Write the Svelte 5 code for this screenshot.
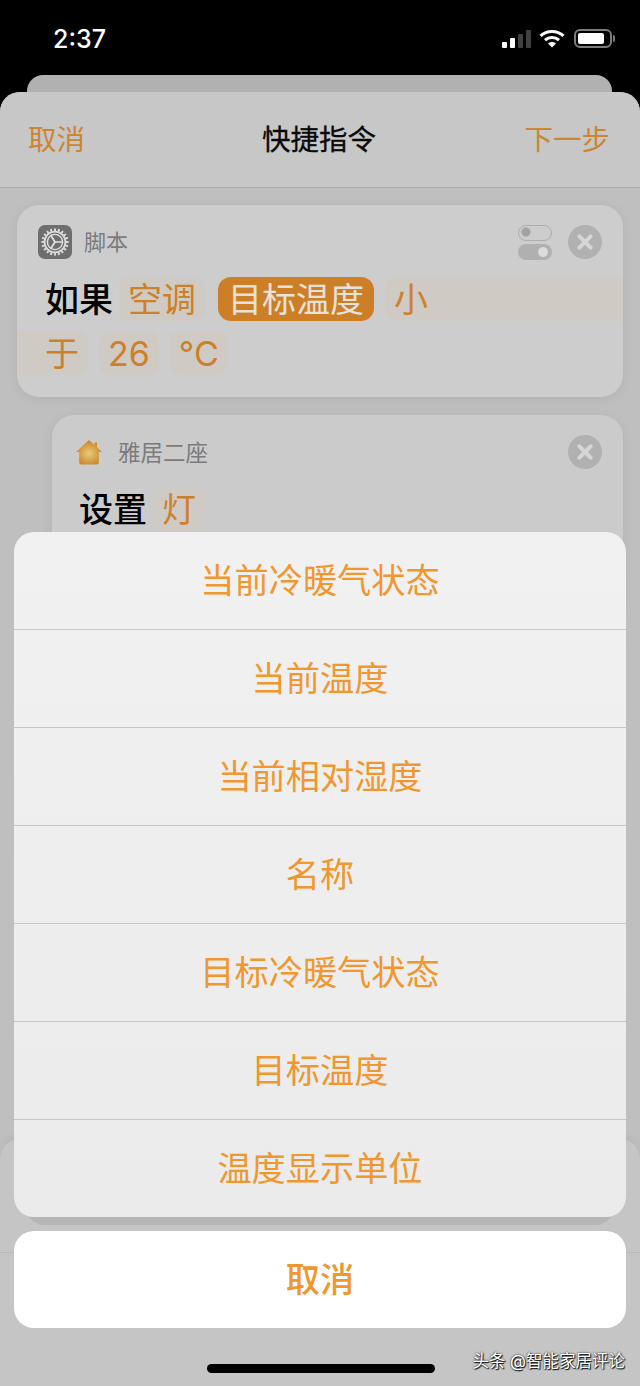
<script>
	const options = ['当前冷暖气状态', '当前温度', '当前相对湿度', '名称', '目标冷暖气状态', '目标温度', '温度显示单位']
	const teeth = Array.from({ length: 20 }, (_, i) => i * 18)
</script>

<div class="page">
	<div class="status">
		<span class="time">2:37</span>
		<div class="status-icons">
			<div class="signal">
				<i class="bar b1"></i>
				<i class="bar b2"></i>
				<i class="bar b3 off"></i>
				<i class="bar b4 off"></i>
			</div>
			<svg class="wifi" width="26" height="19" viewBox="0 0 26 19">
				<path d="M1.5 6.8C7.8 .9 18.2 .9 24.5 6.8" fill="none" stroke="#fff" stroke-width="3" />
				<path d="M6 11.2c3.9-3.5 10.1-3.5 14 0" fill="none" stroke="#fff" stroke-width="3" />
				<path d="M9 14.4c2.3-2 5.7-2 8 0L13 18.6z" fill="#fff" />
			</svg>
			<div class="battery"><i></i></div>
			<i class="battery-tip"></i>
		</div>
	</div>

	<div class="back-card"></div>

	<div class="sheet">
		<header class="nav">
			<span class="nav-side">取消</span>
			<span class="nav-title">快捷指令</span>
			<span class="nav-side right">下一步</span>
		</header>

		<div class="content">
			<section class="card first">
				<div class="card-head">
					<div class="app-icon">
						<svg width="32" height="32" viewBox="0 0 32 32">
							{#each teeth as a}
								<rect x="15" y="2.4" width="2" height="3.6" fill="#d8d8d8" transform="rotate({a} 16 16)" />
							{/each}
							<circle cx="16" cy="16" r="10.4" fill="none" stroke="#d8d8d8" stroke-width="1.8" />
							<circle cx="16" cy="16" r="7.6" fill="none" stroke="#e4e4e4" stroke-width="1.4" />
							<path d="M16 16L24 16M16 16L11.6 9M16 16L11.6 23" stroke="#e4e4e4" stroke-width="1.7" />
						</svg>
					</div>
					<span class="app-name">脚本</span>
					<div class="toggles">
						<div class="toggle on"><i></i></div>
						<div class="toggle off"><i></i></div>
					</div>
					<div class="close"></div>
				</div>
				<div class="line">
					<span class="word">如果</span>
					<span class="token">空调</span>
					<span class="token active">目标温度</span>
					<span class="token open-right">小</span>
				</div>
				<div class="line second">
					<span class="token open-left">于</span>
					<span class="token">26</span>
					<span class="token">°C</span>
				</div>
			</section>

			<section class="card nested">
				<div class="card-head">
					<svg class="house" width="26" height="25" viewBox="0 0 26 25">
						<defs>
							<radialGradient id="glow" cx="50%" cy="55%" r="50%">
								<stop offset="0" stop-color="#e3cd84" />
								<stop offset="0.45" stop-color="#dcae55" />
								<stop offset="1" stop-color="#cd882c" />
							</radialGradient>
						</defs>
						<path d="M13 0L18.5 5V2.5H21V7.3L26 12H22.8V22.5Q22.8 24.5 20.8 24.5H5.2Q3.2 24.5 3.2 22.5V12H0Z" fill="url(#glow)" />
					</svg>
					<span class="app-name">雅居二座</span>
					<div class="close push"></div>
				</div>
				<div class="line">
					<span class="word">设置</span>
					<span class="token">灯</span>
				</div>
			</section>
		</div>

		<div class="dock">
			<div class="dock-peek"></div>
			<div class="dock-line"></div>
		</div>
	</div>

	<div class="actions">
		<div class="action-list">
			{#each options as option}
				<div class="action">{option}</div>
			{/each}
		</div>
		<div class="action-cancel">取消</div>
	</div>

	<div class="home-bar"></div>
	<div class="watermark">头条 @智能家居评论</div>
</div>

<style>
	:global(body) {
		margin: 0;
		background: #000;
	}

	.page {
		position: relative;
		width: 640px;
		height: 1386px;
		overflow: hidden;
		background: #000;
		display: flex;
		flex-direction: column;
		font-family: Inter, 'Noto Sans CJK SC', sans-serif;
	}

	.status {
		height: 75px;
		flex: none;
		box-sizing: border-box;
		display: flex;
		justify-content: space-between;
		padding: 26px 25px 0 53px;
		color: #fff;
	}

	.time {
		font-size: 25px;
		font-weight: 500;
		line-height: 26px;
	}

	.status-icons {
		display: flex;
		align-items: flex-start;
		padding-top: 3px;
	}

	.signal {
		display: flex;
		align-items: flex-end;
		gap: 3px;
		height: 19px;
		margin-right: 8px;
	}

	.bar {
		width: 5px;
		border-radius: 1px;
		background: #fff;
	}

	.bar.off {
		background: #414141;
	}

	.b1 {
		height: 6px;
	}
	.b2 {
		height: 10px;
	}
	.b3 {
		height: 14px;
	}
	.b4 {
		height: 18px;
	}

	.wifi {
		margin-right: 9px;
	}

	.battery {
		width: 38px;
		height: 19px;
		box-sizing: border-box;
		border: 2px solid #7c7c7c;
		border-radius: 6px;
		padding: 2px;
	}

	.battery i {
		display: block;
		width: 26px;
		height: 100%;
		background: #fff;
		border-radius: 2px;
	}

	.battery-tip {
		width: 2px;
		height: 7px;
		margin: 6px 0 0 1px;
		background: #7c7c7c;
		border-radius: 0 2px 2px 0;
	}

	.back-card {
		height: 30px;
		margin: 0 28px -13px 27px;
		flex: none;
		background: #b1b1b1;
		border-radius: 16px 16px 0 0;
	}

	.sheet {
		flex: 1;
		display: flex;
		flex-direction: column;
		position: relative;
		background: #bfbfbf;
		border-radius: 20px 20px 0 0;
		overflow: hidden;
	}

	.nav {
		height: 96px;
		flex: none;
		box-sizing: border-box;
		display: grid;
		grid-template-columns: 1fr auto 1fr;
		align-items: center;
		padding: 0 30px 0 28px;
		background: #c7c7c7;
		border-bottom: 1px solid #acacac;
	}

	.nav-side {
		font-size: 28.5px;
		line-height: 42px;
		color: #cc8530;
	}

	.nav-side.right {
		text-align: right;
	}

	.nav-title {
		font-size: 28.5px;
		line-height: 42px;
		color: #0a0a0a;
		-webkit-text-stroke: 0.3px #0a0a0a;
	}

	.content {
		flex: 1;
		min-height: 0;
		box-sizing: border-box;
		padding: 17px 17px 0;
		display: flex;
		flex-direction: column;
		gap: 18px;
		overflow: hidden;
	}

	.card {
		flex: none;
		box-sizing: border-box;
		background: #cdcdcd;
		border-radius: 22px;
		box-shadow: 0 2px 12px rgba(0, 0, 0, 0.07);
	}

	.first {
		height: 192px;
		padding: 20px 21px 0 21px;
		overflow: hidden;
	}

	.nested {
		height: 200px;
		margin-left: 35px;
		padding: 20px 21px 0 24px;
		background: #cbcbcb;
		overflow: hidden;
	}

	.card-head {
		display: flex;
		align-items: center;
		height: 34px;
	}

	.app-icon {
		width: 34px;
		height: 34px;
		border-radius: 7px;
		background: #6e6e6e;
		display: flex;
		align-items: center;
		justify-content: center;
	}

	.app-name {
		font-size: 22px;
		line-height: 35px;
		height: 34px;
		color: #7b7b7b;
		margin-left: 12px;
	}

	.nested .app-name {
		font-size: 22.5px;
		margin-left: 11px;
	}

	.house {
		margin-right: 5px;
	}

	.toggles {
		margin-left: auto;
		display: flex;
		flex-direction: column;
		gap: 3px;
		margin-right: 16px;
	}

	.toggle {
		width: 34px;
		height: 16px;
		box-sizing: border-box;
		border-radius: 8px;
		position: relative;
	}

	.toggle i {
		position: absolute;
		width: 10px;
		height: 10px;
		top: 3px;
		border-radius: 50%;
	}

	.toggle.on {
		border: 1.5px solid #aeaeae;
	}

	.toggle.on i {
		left: 2px;
		top: 1.5px;
		box-sizing: border-box;
		background: #a2a2a2;
		border: 1.5px solid #b8b8b8;
	}

	.toggle.off {
		background: #b0b0b0;
	}

	.toggle.off i {
		right: 4px;
		background: #dcdcdc;
	}

	.close {
		width: 34px;
		height: 34px;
		flex: none;
		border-radius: 50%;
		background: #b1b1b1;
		position: relative;
	}

	.close.push {
		margin-left: auto;
	}

	.close::before,
	.close::after {
		content: '';
		position: absolute;
		left: 7px;
		top: 15px;
		width: 20px;
		height: 4px;
		border-radius: 2px;
		background: #d6d6d6;
		transform: rotate(45deg);
	}

	.close::after {
		transform: rotate(-45deg);
	}

	.line {
		display: flex;
		align-items: center;
		gap: 11px;
		height: 44px;
		margin-top: 18px;
		margin-left: 7px;
		font-size: 34px;
	}

	.first .line {
		margin-right: -21px;
	}

	.nested .line {
		margin-left: 3px;
		margin-top: 18px;
		gap: 11px;
	}

	.line.second {
		margin-top: 10px;
	}

	.word {
		font-weight: 500;
		color: #000;
		line-height: 46px;
		height: 44px;
		margin-right: -5px;
	}

	.token {
		height: 44px;
		line-height: 46px;
		box-sizing: border-box;
		padding: 0 9px;
		border-radius: 11px;
		background: #cfcac3;
		color: #cc8029;
		white-space: nowrap;
	}

	.token.active {
		background: #cd7f27;
		color: #e6e1da;
		margin-left: 2px;
		padding: 0 10px;
		border-radius: 13px;
	}

	.open-right {
		flex: 1;
		border-radius: 11px 0 0 11px;
	}

	.open-left {
		margin-left: -28px;
		padding-left: 28px;
		border-radius: 0 11px 11px 0;
	}

	.dock {
		position: relative;
		height: 248px;
		flex: none;
		box-sizing: border-box;
		background: #c5c5c5;
		border-radius: 20px 20px 0 0;
		border-top: 1px solid #b9b9b9;
		box-shadow: 0 -2px 8px rgba(0, 0, 0, 0.05);
	}

	.dock-peek {
		position: absolute;
		left: 25px;
		right: 25px;
		top: 60px;
		height: 26px;
		background: #b6b6b6;
		border-radius: 0 0 20px 20px;
	}

	.dock-line {
		position: absolute;
		left: 0;
		right: 0;
		top: 113px;
		height: 1px;
		background: #b8b8b8;
	}

	.actions {
		position: absolute;
		left: 14px;
		right: 14px;
		top: 532px;
		display: flex;
		flex-direction: column;
		gap: 14px;
		color: #f0972f;
		font-size: 34.2px;
		text-align: center;
	}

	.action-list {
		border-radius: 20px;
		overflow: hidden;
		background: linear-gradient(#f1f1f1, #ebebeb);
	}

	.action {
		height: 98px;
		line-height: 98px;
		box-sizing: border-box;
		border-bottom: 1px solid #c6c6c6;
	}

	.action:last-child {
		height: 97px;
		border-bottom: 0;
	}

	.action-cancel {
		height: 97px;
		line-height: 98px;
		background: #fff;
		border-radius: 20px;
		font-weight: 500;
	}

	.home-bar {
		position: absolute;
		left: 207px;
		top: 1364px;
		width: 228px;
		height: 9px;
		border-radius: 5px;
		background: #000;
	}

	.watermark {
		position: absolute;
		right: 15px;
		top: 1349px;
		font-size: 16.5px;
		line-height: 24px;
		color: #fff;
		text-shadow: 0 0 2px #000, 1px 1px 1px #111;
		white-space: nowrap;
	}
</style>
